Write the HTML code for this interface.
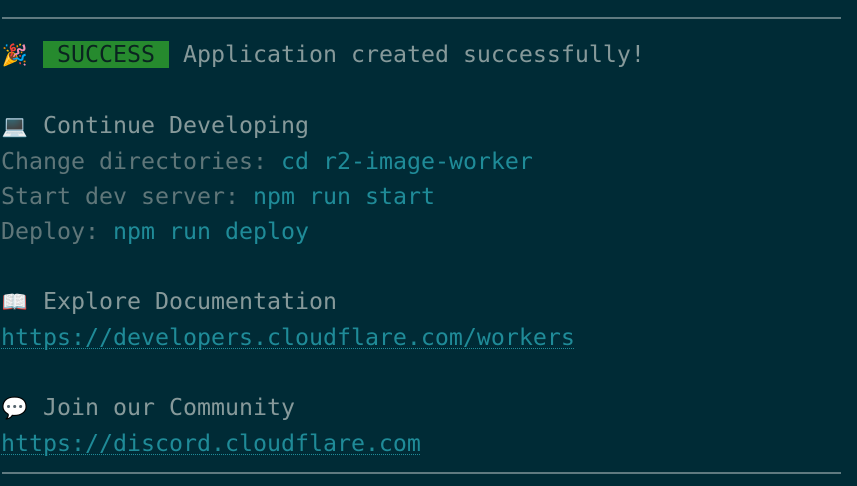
<!DOCTYPE html>
<html><head><meta charset="utf-8"><style>
html,body{margin:0;padding:0;background:#002b36;width:857px;height:486px;overflow:hidden}
.hr{position:absolute;left:2px;width:839px;height:2px;background:#5f7a80}
pre{position:absolute;left:1px;top:37px;margin:0;font-family:"DejaVu Sans Mono","Liberation Mono",monospace;font-size:23.25px;line-height:35px;color:#839496;white-space:pre}
.e{display:inline-block;width:28px;text-align:center;font-size:21px}
.ok{background:#268a2e;color:#0a2420}
.h{color:#86999a}
.g{color:#5f7679}
.c{color:#1f8b98}
.u{color:#1f8b98;text-decoration:underline dotted;text-underline-offset:3px;text-decoration-thickness:1px}
</style></head><body>
<div class="hr" style="top:17px"></div>
<pre><span class="e">🎉</span> <span class="ok"> SUCCESS </span> <span class="h">Application created successfully!</span>

<span class="e">💻</span> <span class="h">Continue Developing</span>
<span class="g">Change directories: </span><span class="c">cd r2-image-worker</span>
<span class="g">Start dev server: </span><span class="c">npm run start</span>
<span class="g">Deploy: </span><span class="c">npm run deploy</span>

<span class="e">📖</span> <span class="h">Explore Documentation</span>
<span class="u">https://developers.cloudflare.com/workers</span>

<span class="e">💬</span> <span class="h">Join our Community</span>
<span class="u">https://discord.cloudflare.com</span></pre>
<div class="hr" style="top:472px"></div>
</body></html>
